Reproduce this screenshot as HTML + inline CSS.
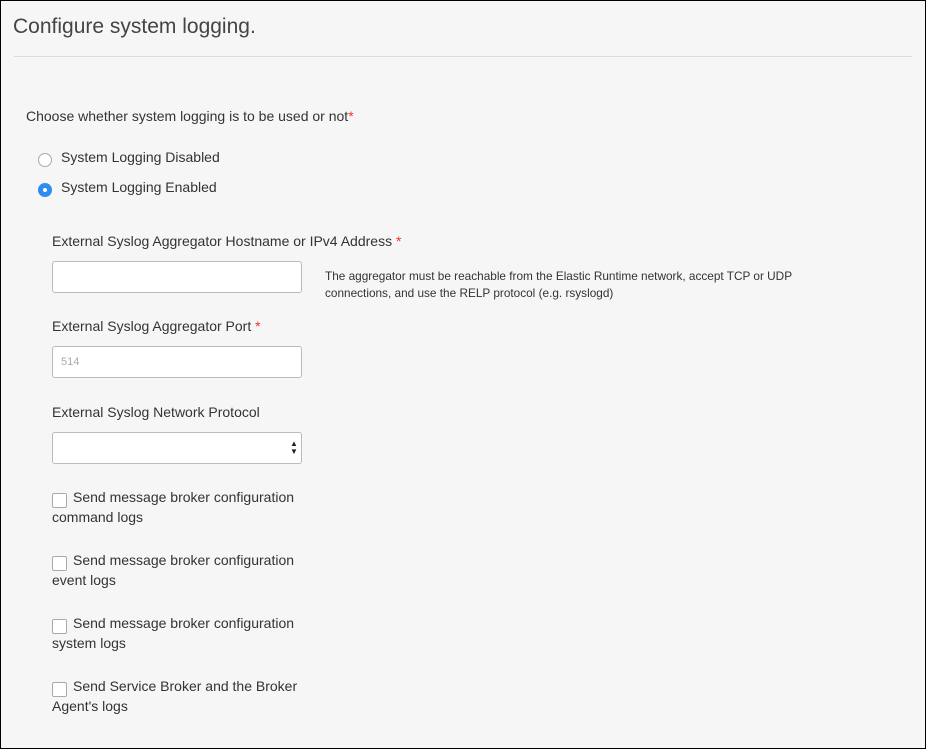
<!DOCTYPE html>
<html><head><style>
html,body{margin:0;padding:0}
body{width:926px;height:749px;background:#f6f6f6;font-family:"Liberation Sans",sans-serif;color:#333;position:relative;overflow:hidden;box-sizing:border-box;border:1px solid #000}
#w{position:absolute;left:-1px;top:-1px;width:926px;height:749px}
.a{position:absolute;white-space:nowrap}
.t{font-size:21px;color:#444;left:13px;top:15px}
.hr{position:absolute;left:14px;top:56px;width:898px;height:1px;background:#ddd}
.l{font-size:14px;color:#333}
.r{color:#e33}
.inp{position:absolute;left:52px;width:248px;height:30px;border:1px solid #bbb;border-radius:3px;background:#fff}
.rad{position:absolute;left:38px;width:14px;height:14px;border-radius:50%;box-sizing:border-box}
.cb{position:absolute;left:52px;width:13px;height:13px;border:1px solid #aaa;border-radius:2px;background:#fff}
.h{font-size:11.8px;color:#333;left:325px;line-height:17px}
</style></head><body><div id="w">
<div class="a t">Configure system logging.</div>
<div class="hr"></div>
<div class="a l" style="left:26px;top:108px">Choose whether system logging is to be used or not<span class="r">*</span></div>
<div class="rad" style="top:153px;border:1px solid #aaa;background:#fff"></div>
<div class="a l" style="left:61px;top:149px">System Logging Disabled</div>
<div class="rad" style="top:183px;background:#2d8cf0"><div style="position:absolute;left:5px;top:5px;width:4px;height:4px;border-radius:50%;background:#fff"></div></div>
<div class="a l" style="left:61px;top:179px">System Logging Enabled</div>
<div class="a l" style="left:52px;top:233px">External Syslog Aggregator Hostname or IPv4 Address <span class="r">*</span></div>
<div class="inp" style="top:261px"></div>
<div class="a h" style="top:268px">The aggregator must be reachable from the Elastic Runtime network, accept TCP or UDP<br>connections, and use the RELP protocol (e.g. rsyslogd)</div>
<div class="a l" style="left:52px;top:318px">External Syslog Aggregator Port <span class="r">*</span></div>
<div class="inp" style="top:346px"><span class="a" style="left:8px;top:9px;font-size:11px;color:#aaa">514</span></div>
<div class="a l" style="left:52px;top:404px">External Syslog Network Protocol</div>
<div class="inp" style="top:432px"><span class="a" style="left:237px;top:7px;font-size:8px;line-height:8px;color:#222">▲<br>▼</span></div>
<div class="cb" style="top:493px"></div>
<div class="a l" style="left:73px;top:489px">Send message broker configuration</div>
<div class="a l" style="left:52px;top:509px">command logs</div>
<div class="cb" style="top:556px"></div>
<div class="a l" style="left:73px;top:552px">Send message broker configuration</div>
<div class="a l" style="left:52px;top:572px">event logs</div>
<div class="cb" style="top:619px"></div>
<div class="a l" style="left:73px;top:615px">Send message broker configuration</div>
<div class="a l" style="left:52px;top:635px">system logs</div>
<div class="cb" style="top:682px"></div>
<div class="a l" style="left:73px;top:678px">Send Service Broker and the Broker</div>
<div class="a l" style="left:52px;top:698px">Agent's logs</div>
</div></body></html>
